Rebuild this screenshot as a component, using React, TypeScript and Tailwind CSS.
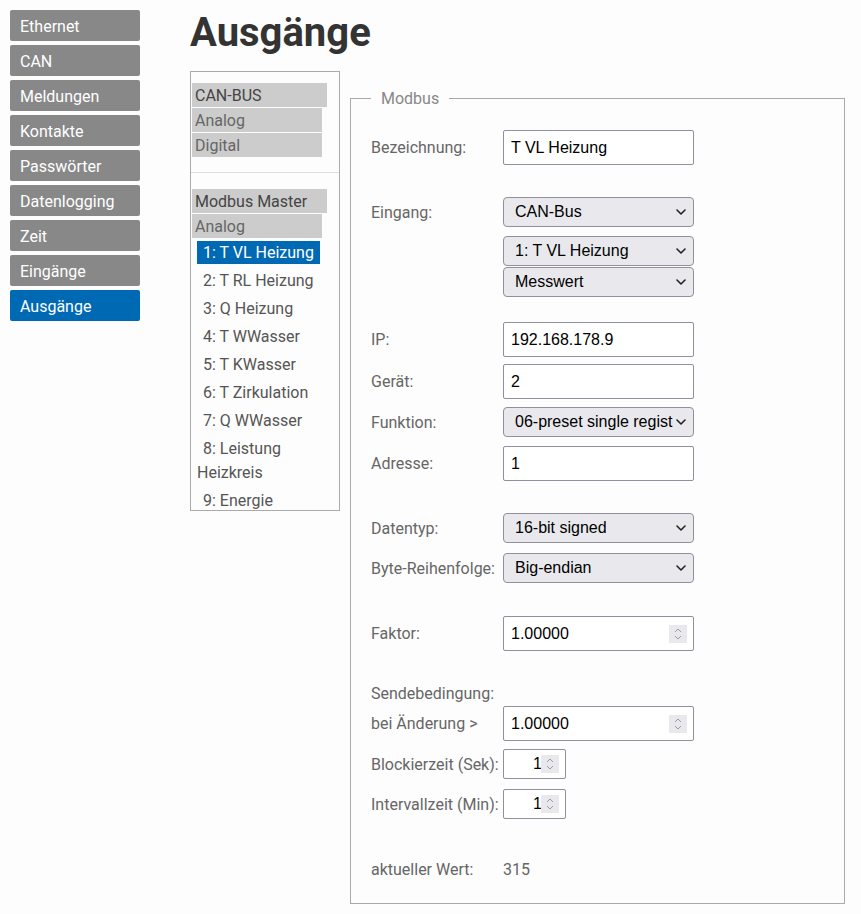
import React from 'react';

const navItems = ['Ethernet', 'CAN', 'Meldungen', 'Kontakte', 'Passwörter', 'Datenlogging', 'Zeit', 'Eingänge', 'Ausgänge'];

const outputs = [
  '1: T VL Heizung',
  '2: T RL Heizung',
  '3: Q Heizung',
  '4: T WWasser',
  '5: T KWasser',
  '6: T Zirkulation',
  '7: Q WWasser',
  '8: Leistung Heizkreis',
  '9: Energie',
];

const Chevron = () => (
  <svg width="10" height="6" viewBox="0 0 10 6" className="pointer-events-none absolute right-[8px] top-1/2 -translate-y-1/2">
    <path d="M1 1l4 4 4-4" fill="none" stroke="#222" strokeWidth="1.6" strokeLinecap="round" strokeLinejoin="round" />
  </svg>
);

const Spinner = () => (
  <span className="pointer-events-none absolute right-[7px] top-1/2 flex h-[18px] w-[18px] -translate-y-1/2 flex-col items-center justify-center gap-[2px] bg-[#e9e9ed]">
    <svg width="8" height="5" viewBox="0 0 8 5">
      <path d="M1 4l3-3 3 3" fill="none" stroke="#9a9aa0" strokeWidth="1" />
    </svg>
    <svg width="8" height="5" viewBox="0 0 8 5">
      <path d="M1 1l3 3 3-3" fill="none" stroke="#9a9aa0" strokeWidth="1" />
    </svg>
  </span>
);

const inputFont = { fontFamily: '"Liberation Sans", Arial, sans-serif' };

const TextBox = ({ value }: { value: string }) => (
  <input
    readOnly
    value={value}
    style={inputFont}
    className="h-[35px] w-[191px] rounded-[2px] border border-[#8f8f9d] bg-white px-[7px] text-[16px] text-black outline-none"
  />
);

const NumberBox = ({ value, small }: { value: string; small?: boolean }) => (
  <div className="relative">
    <input
      readOnly
      value={value}
      style={inputFont}
      className={
        small
          ? 'h-[30px] w-[63px] rounded-[2px] border border-[#8f8f9d] bg-white pr-[23px] text-right text-[16px] text-black outline-none'
          : 'h-[35px] w-[191px] rounded-[2px] border border-[#8f8f9d] bg-white px-[7px] text-[16px] text-black outline-none'
      }
    />
    <Spinner />
  </div>
);

const SelectBox = ({ value }: { value: string }) => (
  <div className="relative h-[30px] w-[191px]">
    <select
      value={value}
      onChange={() => {}}
      style={inputFont}
      className="h-full w-full appearance-none overflow-hidden rounded-[4px] border border-[#8f8f9d] bg-[#e9e9ed] pl-[11px] pr-[20px] text-[16px] text-black outline-none"
    >
      <option>{value}</option>
    </select>
    <Chevron />
  </div>
);

const Row = ({ label, className, children }: { label: string; className: string; children: React.ReactNode }) => (
  <div className={`flex items-center ${className}`}>
    <span className="w-[132px] shrink-0 pt-[1px] text-[#666]">{label}</span>
    {children}
  </div>
);

export default function App() {
  return (
    <div
      className="flex min-h-[914px] bg-[#fdfdfd] text-[16px]"
      style={{ fontFamily: 'Roboto, "Liberation Sans", Arial, sans-serif' }}
    >
      {/* Menu */}
      <nav className="ml-[10px] mt-[10px] flex w-[130px] flex-col gap-[4px]">
        {navItems.map((item) => (
          <div
            key={item}
            className={`flex h-[31px] items-center rounded-[2px] pl-[10px] pt-[2px] text-white ${
              item === 'Ausgänge' ? 'bg-[#0069b4]' : 'bg-[#888888]'
            }`}
          >
            {item}
          </div>
        ))}
      </nav>

      <main className="ml-[50px] flex flex-col">
        <h1 className="mt-[9px] text-[40px] font-bold leading-[47px] text-[#333]">Ausgänge</h1>

        <div className="mt-[15px] flex items-start gap-[10px]">
          {/* Tree */}
          <div className="h-[440px] w-[150px] overflow-hidden border border-[#aaa] pt-[11px]">
            <div className="flex flex-col gap-[1px] pl-[1px]">
              <div className="flex h-[24px] w-[135px] items-center bg-[#cccccc] pl-[3px] pt-[1px] text-[#444]">CAN-BUS</div>
              <div className="flex h-[24px] w-[130px] items-center bg-[#cccccc] pl-[3px] pt-[1px] text-[#666]">Analog</div>
              <div className="flex h-[24px] w-[130px] items-center bg-[#cccccc] pl-[3px] pt-[1px] text-[#666]">Digital</div>
            </div>
            <div className="mt-[15px] h-px bg-[#dddddd]" />
            <div className="mt-[16px] flex flex-col gap-[1px] pl-[1px]">
              <div className="flex h-[24px] w-[135px] items-center bg-[#cccccc] pl-[3px] pt-[1px] text-[#444]">Modbus Master</div>
              <div className="flex h-[24px] w-[130px] items-center bg-[#cccccc] pl-[3px] pt-[1px] text-[#666]">Analog</div>
            </div>
            <ul className="mt-[3px] flex flex-col gap-[4px] pl-[6px] pr-[4px]">
              {outputs.map((o, i) => (
                <li key={o} className="leading-[24px] text-[#555]">
                  <span
                    className={
                      i === 0
                        ? 'bg-[#0069b4] px-[6px] py-[2px] text-white'
                        : 'pl-[6px]'
                    }
                  >
                    {o}
                  </span>
                </li>
              ))}
            </ul>
          </div>

          {/* Modbus form */}
          <fieldset className="mt-[18px] w-[495px] border border-[#aaa] pb-[24px] pl-[20px]">
            <legend className="px-[10px] leading-[19px] text-[#888]">Modbus</legend>

            <Row label="Bezeichnung:" className="mt-[22px]">
              <TextBox value="T VL Heizung" />
            </Row>

            <div className="mt-[32px] flex items-start">
              <span className="flex h-[30px] w-[132px] shrink-0 items-center pt-[1px] text-[#666]">Eingang:</span>
              <div className="flex flex-col">
                <SelectBox value="CAN-Bus" />
                <div className="mt-[9px]">
                  <SelectBox value="1: T VL Heizung" />
                </div>
                <div className="mt-[1px]">
                  <SelectBox value="Messwert" />
                </div>
              </div>
            </div>

            <Row label="IP:" className="mt-[25px]">
              <TextBox value="192.168.178.9" />
            </Row>
            <Row label="Gerät:" className="mt-[7px]">
              <TextBox value="2" />
            </Row>
            <Row label="Funktion:" className="mt-[8px]">
              <SelectBox value="06-preset single register" />
            </Row>
            <Row label="Adresse:" className="mt-[9px]">
              <TextBox value="1" />
            </Row>

            <Row label="Datentyp:" className="mt-[32px]">
              <SelectBox value="16-bit signed" />
            </Row>
            <Row label="Byte-Reihenfolge:" className="mt-[10px]">
              <SelectBox value="Big-endian" />
            </Row>

            <Row label="Faktor:" className="mt-[33px]">
              <NumberBox value="1.00000" />
            </Row>

            <div className="mt-[33px] leading-[19px] text-[#666]">Sendebedingung:</div>
            <Row label="bei Änderung >" className="mt-[3px]">
              <NumberBox value="1.00000" />
            </Row>
            <Row label="Blockierzeit (Sek):" className="mt-[8px]">
              <NumberBox value="1" small />
            </Row>
            <Row label="Intervallzeit (Min):" className="mt-[10px]">
              <NumberBox value="1" small />
            </Row>

            <div className="mt-[41px] flex leading-[19px] text-[#666]">
              <span className="w-[132px]">aktueller Wert:</span>
              <span>315</span>
            </div>
          </fieldset>
        </div>
      </main>
    </div>
  );
}
